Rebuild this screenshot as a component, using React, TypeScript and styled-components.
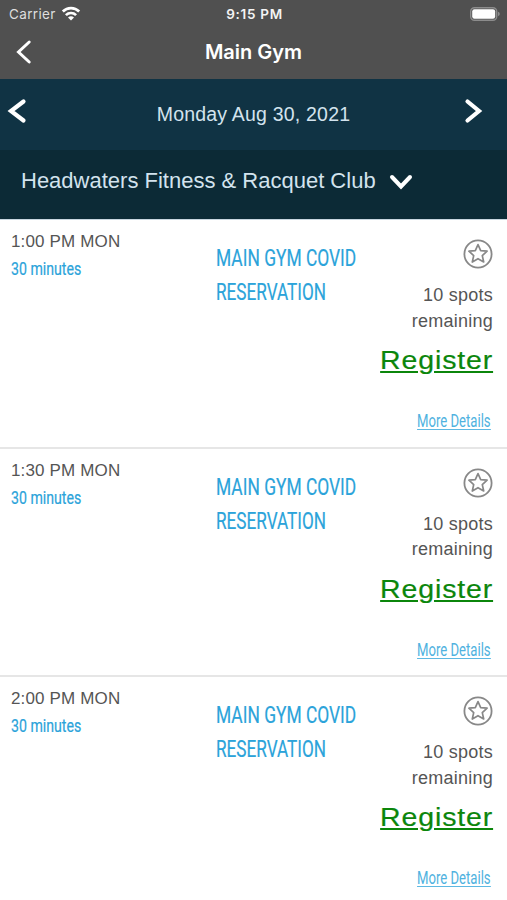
import React from "react";
import styled, { createGlobalStyle } from "styled-components";

const GlobalStyle = createGlobalStyle`
  * { box-sizing: border-box; }
  body { margin: 0; background: #fff; overflow: hidden; }
`;

const Screen = styled.main`
  width: 507px;
  height: 900px;
  overflow: hidden;
  background: #fff;
  font-family: "Liberation Sans", Arial, sans-serif;
`;

const Top = styled.header`
  height: 79px;
  background: #505050;
  color: #fff;
  font-family: Inter, sans-serif;
`;

const StatusBar = styled.div`
  display: grid;
  grid-template-columns: 1fr auto 1fr;
  align-items: center;
  height: 27px;
  padding: 0 7px 0 9px;
`;

const Carrier = styled.div`
  display: flex;
  align-items: center;
  gap: 5px;
  color: #dedede;
  font-size: 13.5px;
  letter-spacing: 0.35px;
`;

const Clock = styled.div`
  font-size: 13.5px;
  font-weight: 600;
  letter-spacing: 0.7px;
  color: #f4f4f4;
`;

const Battery = styled.svg`
  justify-self: end;
`;

const NavBar = styled.div`
  display: grid;
  grid-template-columns: 60px 1fr 60px;
  align-items: center;
  height: 50px;
`;

const IconButton = styled.button<{ $left?: number }>`
  display: flex;
  padding: 0;
  border: 0;
  background: none;
  margin-left: ${(p) => p.$left ?? 0}px;
`;

const Title = styled.h1`
  margin: 0;
  text-align: center;
  font-size: 20px;
  font-weight: 600;
  letter-spacing: 0;
`;

const DateBar = styled.div`
  display: grid;
  grid-template-columns: 60px 1fr 60px;
  align-items: center;
  height: 71px;
  padding-bottom: 7px;
  background: #103344;
  color: #d3e3ee;
`;

const DateText = styled.div`
  margin-top: 6px;
  text-align: center;
  font-size: 19.5px;
  letter-spacing: 0.2px;
`;

const ClubBar = styled.div`
  display: flex;
  align-items: center;
  gap: 13px;
  height: 69px;
  padding: 0 0 7px 21px;
  background: #0c2a36;
  color: #d3e3ee;
  font-size: 22px;
`;

const List = styled.div`
  border-top: 1px solid #c9d6e0;
`;

const Slot = styled.article`
  display: grid;
  grid-template-columns: 215.5px minmax(0, 1fr) 130px;
  height: 228.5px;
  border-bottom: 2px solid #e6e6e6;
`;

const When = styled.div`
  padding: 12px 0 0 11px;
`;

const Time = styled.div`
  font-size: 17px;
  line-height: 20px;
  letter-spacing: 0.15px;
  color: #555;
  white-space: nowrap;
`;

const Condensed = styled.div<{ $scale: number }>`
  width: max-content;
  white-space: nowrap;
  font-family: Roboto, sans-serif;
  transform: scaleX(${(p) => p.$scale});
  transform-origin: 0 50%;
`;

const Duration = styled(Condensed)`
  margin-top: 6px;
  font-size: 18px;
  line-height: 22px;
  color: #2ba3da;
  -webkit-text-stroke: 0.2px #2ba3da;
`;

const ClassName = styled.div`
  padding-top: 21px;
`;

const ClassLine = styled(Condensed)`
  font-size: 24.5px;
  line-height: 34.3px;
  color: #2ba3da;
  -webkit-text-stroke: 0.2px #2ba3da;
`;

const Side = styled.div`
  display: flex;
  flex-direction: column;
  align-items: flex-end;
  padding: 19px 14px 0 0;
`;

const Spots = styled.div`
  margin-top: 14px;
  text-align: right;
  font-size: 18px;
  line-height: 25.6px;
  color: #555;
  letter-spacing: 0.25px;
`;

const Register = styled.a`
  margin-top: 9px;
  font-size: 26.5px;
  line-height: 34px;
  letter-spacing: 0.8px;
  transform: scaleX(1.075);
  transform-origin: 100% 50%;
  color: #0b860b;
  -webkit-text-stroke: 0.2px #0b860b;
  text-decoration: underline;
  text-decoration-thickness: 2px;
  text-underline-offset: 2px;
`;

const Details = styled(Condensed)`
  margin: 33px 2px 0 0;
  transform-origin: 100% 50%;
  font-size: 19px;
  line-height: 21px;
  height: 20px;
  color: #4fb2e0;
  border-bottom: 1px solid #5db8e2;
`;

const Chevron = ({ d, w, h, sw }: { d: string; w: number; h: number; sw: number }) => (
  <svg width={w} height={h} viewBox={`0 0 ${w} ${h}`} fill="none" stroke="#fff" strokeWidth={sw} strokeLinecap="round">
    <path d={d} />
  </svg>
);

const Wifi = () => (
  <svg width="20" height="16" viewBox="0 0 20 16" fill="none" stroke="#fff" strokeWidth="2.7">
    <path d="M1.8 5.5C6.4 0.9 13.6 0.9 18.2 5.5" />
    <path d="M4.9 9.1C7.8 6.3 12.2 6.3 15.1 9.1" />
    <path d="M10 14.5L7 11.5Q10 8.9 13 11.5Z" fill="#fff" stroke="none" />
  </svg>
);

const Star = () => (
  <svg width="30" height="30" viewBox="0 0 30 30" fill="none" stroke="#888">
    <circle cx="15" cy="15" r="13.6" strokeWidth="1.8" />
    <path
      d="M15 5.6L17.7 11.6L24.1 12.2L19.3 16.6L20.7 23L15 19.7L9.3 23L10.7 16.6L5.9 12.2L12.3 11.6Z"
      strokeWidth="1.7"
      strokeLinejoin="round"
    />
  </svg>
);

const times = ["1:00 PM MON", "1:30 PM MON", "2:00 PM MON"];

export default function App() {
  return (
    <Screen>
      <GlobalStyle />
      <Top>
        <StatusBar>
          <Carrier>
            <span>Carrier</span>
            <Wifi />
          </Carrier>
          <Clock>9:15 PM</Clock>
          <Battery width="30" height="14" viewBox="0 0 30 14">
            <rect x="0.7" y="0.7" width="26" height="12.6" rx="3.8" fill="none" stroke="#8c8c8c" strokeWidth="1.4" />
            <rect x="2.2" y="2.2" width="23" height="9.6" rx="2.2" fill="#fff" />
            <path d="M28 4.8Q29.8 5.4 29.8 7Q29.8 8.6 28 9.2Z" fill="#8c8c8c" />
          </Battery>
        </StatusBar>
        <NavBar>
          <IconButton $left={15} aria-label="Back">
            <Chevron w={18} h={26} sw={3} d="M14.2 3L3.5 13L14.2 23" />
          </IconButton>
          <Title>Main Gym</Title>
        </NavBar>
      </Top>
      <DateBar>
        <IconButton $left={7} aria-label="Previous day">
          <Chevron w={20} h={26} sw={4.2} d="M16.5 3.5L4 13L16.5 22.5" />
        </IconButton>
        <DateText>Monday Aug 30, 2021</DateText>
        <IconButton $left={17} aria-label="Next day">
          <Chevron w={20} h={26} sw={4.2} d="M3.5 3.5L15 13L3.5 22.5" />
        </IconButton>
      </DateBar>
      <ClubBar>
        <span>Headwaters Fitness &amp; Racquet Club</span>
        <Chevron w={24} h={18} sw={4} d="M3 5L12 14.5L21 5" />
      </ClubBar>
      <List>
        {times.map((time) => (
          <Slot key={time}>
            <When>
              <Time>{time}</Time>
              <Duration $scale={0.785}>30 minutes</Duration>
            </When>
            <ClassName>
              <ClassLine $scale={0.71}>MAIN GYM COVID</ClassLine>
              <ClassLine $scale={0.7}>RESERVATION</ClassLine>
            </ClassName>
            <Side>
              <Star />
              <Spots>
                10 spots
                <br />
                remaining
              </Spots>
              <Register>Register</Register>
              <Details $scale={0.69}>More Details</Details>
            </Side>
          </Slot>
        ))}
      </List>
    </Screen>
  );
}
